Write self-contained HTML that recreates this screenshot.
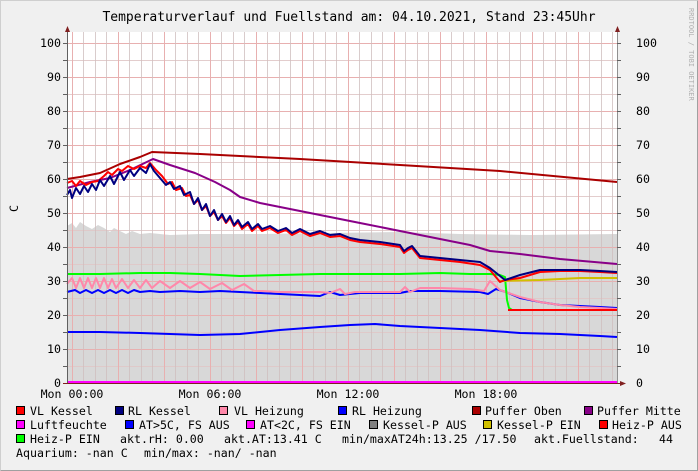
<!DOCTYPE html>
<html><head><meta charset="utf-8"><style>
body{margin:0;width:698px;height:471px;overflow:hidden;background:#f0f0f0}
svg{display:block}
text{font-family:"DejaVu Sans Mono","Liberation Mono",monospace;font-size:11.6px;fill:#000;white-space:pre}
</style></head><body>
<svg width="698" height="471" viewBox="0 0 698 471" xmlns="http://www.w3.org/2000/svg">
<rect x="0" y="0" width="698" height="471" fill="#f0f0f0"/>
<path d="M0.5 470.5V0.5H697.5" stroke="#cfcfcf" fill="none"/>
<path d="M0.5 470.5H697.5V0.5" stroke="#a0a0a0" fill="none"/>
<text x="349" y="21" text-anchor="middle" style="font-size:13px">Temperaturverlauf und Fuellstand am: 04.10.2021, Stand 23:45Uhr</text>
<text transform="translate(689,8) rotate(90)" style="font-size:7px;fill:#b0b0b0">RRDTOOL / TOBI OETIKER</text>
<rect x="67" y="32" width="550" height="351" fill="#fff"/>
<path d="M67 383V226L72 223L76 228L80 222L86 226L92 229L98 225L104 228L110 232L114 228L120 231L126 234L132 231L140 234L150 233L170 235L200 234L260 234L330 233L400 232L460 234L530 235L617 234V383Z" fill="#d8d8d8"/>
<g stroke="#e0c8c8" opacity="0.9">
<path d="M67 366.5H617M67 332.5H617M67 298.5H617M67 264.5H617M67 230.5H617M67 196.5H617M67 162.5H617M67 128.5H617M67 94.5H617M67 60.5H617"/>
</g>
<g stroke="#e8b0b0">
<path d="M67 349.5H617M67 315.5H617M67 281.5H617M67 247.5H617M67 213.5H617M67 179.5H617M67 145.5H617M67 111.5H617M67 77.5H617M67 43.5H617"/>
</g>
<g stroke="#d0c0c0" opacity="0.8">
<path d="M83.5 32V383M95.5 32V383M106.5 32V383M129.5 32V383M141.5 32V383M152.5 32V383M175.5 32V383M187.5 32V383M198.5 32V383M221.5 32V383M233.5 32V383M244.5 32V383M267.5 32V383M279.5 32V383M290.5 32V383M313.5 32V383M325.5 32V383M336.5 32V383M359.5 32V383M371.5 32V383M382.5 32V383M405.5 32V383M417.5 32V383M428.5 32V383M451.5 32V383M463.5 32V383M474.5 32V383M497.5 32V383M509.5 32V383M520.5 32V383M543.5 32V383M555.5 32V383M566.5 32V383M589.5 32V383M601.5 32V383M612.5 32V383"/>
</g>
<g stroke="#e8b0b0">
<path d="M72.5 32V383M118.5 32V383M164.5 32V383M210.5 32V383M256.5 32V383M302.5 32V383M348.5 32V383M394.5 32V383M440.5 32V383M486.5 32V383M532.5 32V383M578.5 32V383"/>
</g>
<g fill="none" stroke-width="2" stroke-linejoin="round">
<polyline stroke="#0000ff" points="67,332 100,332 140,333 200,335 240,334 280,330 320,327 350,325 375,324 400,326 440,328 480,330 520,333 560,334 600,336 617,337"/>
<polyline stroke="#0000ff" points="67,292 75,290 80,293 86,290 92,293 98,290 104,293 110,290 116,293 122,290 128,293 134,290 140,292 150,291 160,292 180,291 200,292 220,291 240,292 260,293 280,294 300,295 320,296 330,292 340,295 350,294 360,293 400,293 410,291 420,291 440,291 480,292 488,294 496,289 506,292 520,298 540,302 560,305 580,306 600,307 617,308"/>
<polyline stroke="#ff88aa" points="67,284 72,278 76,288 80,278 84,288 88,278 92,288 96,278 100,288 104,278 108,288 112,279 116,288 122,279 128,288 134,280 140,288 146,280 152,288 160,281 170,288 180,281 190,288 200,282 210,289 222,283 232,290 244,284 254,291 262,291 280,292 300,292 320,292 330,293 340,289 345,294 355,292 400,292 405,287 410,292 420,288 440,288 470,289 484,291 490,281 500,290 520,297 540,302 560,305 580,307 600,308 617,309"/>
<polyline stroke="#00ff00" points="67,274 100,274 140,273 170,273 200,274 240,276 280,275 320,274 360,274 400,274 440,273 470,274 490,274 500,275 505,277 507,300 509,308 512,310"/>
<polyline stroke="#d0c000" points="500,281 540,280 580,278 617,278"/>
<polyline stroke="#ff0000" points="508,310 540,310 580,310 617,310"/>
<polyline stroke="#880088" points="67,188 90,182 110,178 130,170 153,159 170,165 195,173 215,182 230,190 240,197 260,203 300,211 330,217 360,223 400,231 440,239 470,245 490,251 520,254 560,259 617,264"/>
<polyline stroke="#aa0000" points="67,179 80,177 100,173 120,164 140,157 152,152 200,154 300,159 400,165 500,171 617,182"/>
<polyline stroke="#ff0000" points="67,183 72,181 76,186 80,181 86,185 92,182 98,181 104,176 108,172 112,175 118,169 122,171 128,166 134,169 140,166 146,168 150,163 156,170 162,176 168,184 172,182 176,190 182,188 186,196 190,195 194,204 198,200 202,210 206,206 210,216 214,212 218,220 222,216 226,223 230,218 234,226 238,222 242,229 248,224 252,231 258,226 262,231 270,228 278,233 286,230 292,235 300,231 310,236 320,233 330,237 340,236 350,240 360,242 380,244 400,247 404,253 408,250 412,248 420,258 440,260 460,262 480,265 490,270 500,282 505,280 520,278 540,272 560,271 580,271 600,272 617,273"/>
<polyline stroke="#000080" points="67,195 70,190 72,198 76,188 80,194 84,186 88,192 92,184 96,190 100,180 104,186 110,176 114,184 120,172 124,180 130,170 134,176 140,168 146,173 150,164 154,171 160,178 166,185 170,182 174,189 180,186 184,195 190,192 194,204 198,198 202,210 206,204 210,216 214,210 218,220 222,214 226,222 230,216 234,225 238,220 242,227 248,222 252,229 258,224 262,229 270,226 278,231 286,228 292,233 300,229 310,234 320,231 330,235 340,234 350,238 360,240 380,242 400,245 404,251 408,248 412,246 420,256 440,258 460,260 480,262 490,268 505,280 520,275 540,270 560,270 580,270 600,271 617,272"/>
<polyline stroke="#ff00ff" points="67,382 617,382"/>
</g>
<g stroke="#606060" fill="none">
<path d="M67.5 383V32"/>
<path d="M617.5 383V32" stroke="#909090"/>
<path d="M63 383.5H621" stroke="#802020"/>
<path d="M63 366.5H67M63 349.5H67M63 332.5H67M63 315.5H67M63 298.5H67M63 281.5H67M63 264.5H67M63 247.5H67M63 230.5H67M63 213.5H67M63 196.5H67M63 179.5H67M63 162.5H67M63 145.5H67M63 128.5H67M63 111.5H67M63 94.5H67M63 77.5H67M63 60.5H67M63 43.5H67"/>
<path d="M617 366.5H621M617 349.5H621M617 332.5H621M617 315.5H621M617 298.5H621M617 281.5H621M617 264.5H621M617 247.5H621M617 230.5H621M617 213.5H621M617 196.5H621M617 179.5H621M617 162.5H621M617 145.5H621M617 128.5H621M617 111.5H621M617 94.5H621M617 77.5H621M617 60.5H621M617 43.5H621"/>
</g>
<path d="M67.5 26L65 32H70Z" fill="#802020"/>
<path d="M617.5 26L615 32H620Z" fill="#802020"/>
<path d="M626 383.5L620 381V386Z" fill="#802020"/>
<g text-anchor="end">
<text x="61" y="387">0</text><text x="61" y="353">10</text><text x="61" y="319">20</text><text x="61" y="285">30</text><text x="61" y="251">40</text><text x="61" y="217">50</text><text x="61" y="183">60</text><text x="61" y="149">70</text><text x="61" y="115">80</text><text x="61" y="81">90</text><text x="61" y="47">100</text>
</g>
<g>
<text x="636" y="387">0</text><text x="636" y="353">10</text><text x="636" y="319">20</text><text x="636" y="285">30</text><text x="636" y="251">40</text><text x="636" y="217">50</text><text x="636" y="183">60</text><text x="636" y="149">70</text><text x="636" y="115">80</text><text x="636" y="81">90</text><text x="636" y="47">100</text>
</g>
<text transform="translate(18,212) rotate(-90)">C</text>
<g text-anchor="middle">
<text x="72" y="398">Mon 00:00</text><text x="210" y="398">Mon 06:00</text><text x="348" y="398">Mon 12:00</text><text x="486" y="398">Mon 18:00</text>
</g>
<g stroke="#000" stroke-width="1">
<rect x="16.5" y="406.5" width="8" height="8" fill="#ff0000"/>
<rect x="115.5" y="406.5" width="8" height="8" fill="#000080"/>
<rect x="219.5" y="406.5" width="8" height="8" fill="#ff88aa"/>
<rect x="338.5" y="406.5" width="8" height="8" fill="#0000ff"/>
<rect x="472.5" y="406.5" width="8" height="8" fill="#aa0000"/>
<rect x="584.5" y="406.5" width="8" height="8" fill="#880088"/>
<rect x="16.5" y="420.5" width="8" height="8" fill="#ff00ff"/>
<rect x="125.5" y="420.5" width="8" height="8" fill="#0000ff"/>
<rect x="246.5" y="420.5" width="8" height="8" fill="#ff00ff"/>
<rect x="369.5" y="420.5" width="8" height="8" fill="#808080"/>
<rect x="483.5" y="420.5" width="8" height="8" fill="#d0c000"/>
<rect x="599.5" y="420.5" width="8" height="8" fill="#ff0000"/>
<rect x="16.5" y="434.5" width="8" height="8" fill="#00ff00"/>
</g>
<text x="30" y="415">VL Kessel</text><text x="128" y="415">RL Kessel</text><text x="234" y="415">VL Heizung</text><text x="352" y="415">RL Heizung</text><text x="485" y="415">Puffer Oben</text><text x="597" y="415">Puffer Mitte</text>
<text x="30" y="429">Luftfeuchte</text><text x="139" y="429">AT&gt;5C, FS AUS</text><text x="260" y="429">AT&lt;2C, FS EIN</text><text x="383" y="429">Kessel-P AUS</text><text x="497" y="429">Kessel-P EIN</text><text x="612" y="429">Heiz-P AUS</text>
<text x="30" y="443">Heiz-P EIN</text><text x="120" y="443">akt.rH: 0.00</text><text x="224" y="443">akt.AT:13.41 C</text><text x="342" y="443">min/maxAT24h:13.25 /17.50</text><text x="534" y="443">akt.Fuellstand:</text><text x="659" y="443">44</text>
<text x="16" y="457">Aquarium: -nan C</text><text x="144" y="457">min/max: -nan/ -nan</text>
</svg>
</body></html>
